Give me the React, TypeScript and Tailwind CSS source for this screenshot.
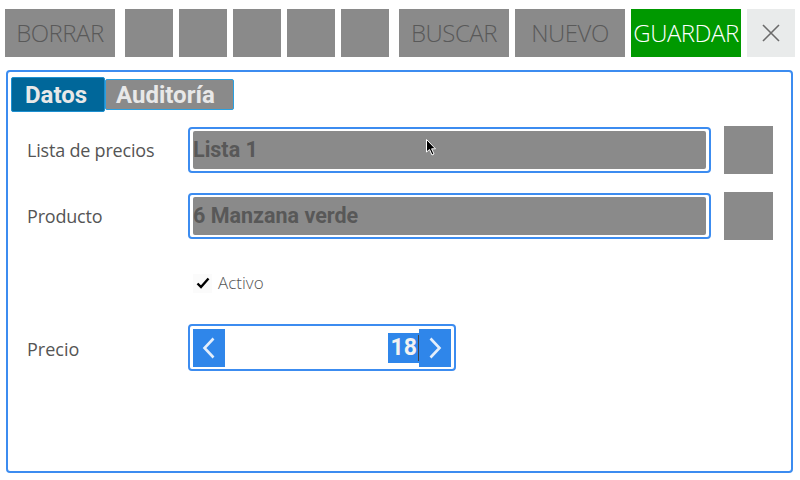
const toolFont = { fontFamily: '"Open Sans", "Liberation Sans", sans-serif' };

function ToolButton({ label, green }: { label?: string; green?: boolean }) {
  return (
    <div
      className={`h-[48px] flex items-center justify-center text-[24px] font-light tracking-[-0.5px] ${
        label ? 'w-[110px]' : 'w-[48px]'
      } ${green ? 'bg-[#009900] text-white' : 'bg-[#8a8a8a] text-[#595959]'}`}
      style={toolFont}
    >
      {label}
    </div>
  );
}

function LookupRow({ label, value }: { label: string; value: string }) {
  return (
    <div className="flex items-center h-[48px]">
      <div className="w-[161px] text-[18px] text-[#555] font-[family-name:'Open_Sans',sans-serif] tracking-[-0.2px]">{label}</div>
      <div className="w-[523px] h-[46px] border-2 border-[#3c8cf0] rounded-[4px] px-[3px] py-[2px] bg-white">
        <div className="h-full bg-[#8a8a8a] rounded-[2px] flex items-center text-[21.5px] font-bold text-[#585858] font-[family-name:Roboto,sans-serif]">
          {value}
        </div>
      </div>
      <div className="ml-[13px] w-[49px] h-[48px] bg-[#8a8a8a]" />
    </div>
  );
}

function Chevron({ dir }: { dir: 'left' | 'right' }) {
  return (
    <svg width="14" height="22" viewBox="0 0 14 22">
      <path
        d={dir === 'left' ? 'M11.5 1.5 L2.5 11 L11.5 20.5' : 'M2.5 1.5 L11.5 11 L2.5 20.5'}
        fill="none"
        stroke="#e4eefb"
        strokeWidth="2.6"
      />
    </svg>
  );
}

export default function App() {
  return (
    <div className="w-[800px] h-[480px] bg-white relative overflow-hidden">
      {/* Toolbar */}
      <div className="flex pt-[9px] pl-[5px]">
        <ToolButton label="BORRAR" />
        <div className="flex gap-[6px] ml-[10px]">
          <ToolButton />
          <ToolButton />
          <ToolButton />
          <ToolButton />
          <ToolButton />
        </div>
        <div className="flex gap-[6px] ml-[10px]">
          <ToolButton label="BUSCAR" />
          <ToolButton label="NUEVO" />
          <ToolButton label="GUARDAR" green />
          <div className="w-[48px] h-[48px] bg-[#e9ebeb] flex items-center justify-center">
            <svg width="18" height="18" viewBox="0 0 18 18">
              <path d="M1 1 L17 17 M17 1 L1 17" stroke="#6b6b6b" strokeWidth="1.6" />
            </svg>
          </div>
        </div>
      </div>

      {/* Panel */}
      <div className="ml-[6px] mt-[13px] w-[787px] h-[403px] border-2 border-[#3c8cf0] rounded-[4px]">
        {/* Tabs */}
        <div className="flex items-center pl-[3px] pt-[5px]">
          <div className="w-[94px] h-[35px] bg-[#00679a] border border-[#1d8fd0] rounded-[2px] text-[#e8e8e8] text-[24px] font-bold pl-[13px] flex items-center font-[family-name:Roboto,sans-serif]">
            Datos
          </div>
          <div className="w-[129px] h-[31px] bg-[#8a8a8a] border border-[#2aa0e0] rounded-[2px] text-[#e8e8e8] text-[24px] font-bold pl-[10px] flex items-center font-[family-name:Roboto,sans-serif]">
            Auditoría
          </div>
        </div>

        {/* Form */}
        <div className="pl-[19px] pt-[14px] flex flex-col">
          <LookupRow label="Lista de precios" value="Lista 1" />
          <div className="mt-[18px]">
            <LookupRow label="Producto" value="6 Manzana verde" />
          </div>

          <div className="mt-[31px] h-[24px] flex items-center pl-[166px]">
            <div className="w-[19px] h-[19px] bg-[#fbfbfb] flex items-center justify-center">
              <svg width="14" height="12" viewBox="0 0 14 12">
                <path d="M1.5 6.5 L5 10 L12.5 1.5" fill="none" stroke="#000" strokeWidth="2.4" />
              </svg>
            </div>
            <span className="ml-[6px] text-[17px] font-light text-[#555]" style={toolFont}>
              Activo
            </span>
          </div>

          <div className="mt-[29px] flex items-center h-[47px]">
            <div className="w-[161px] text-[18px] text-[#555] font-[family-name:'Open_Sans',sans-serif] pt-[3px]">Precio</div>
            <div className="w-[268px] h-[47px] border-2 border-[#3c8cf0] rounded-[4px] px-[3px] py-[3px] flex items-center">
              <div className="w-[32px] h-[38px] bg-[#2f86ea] flex items-center justify-center">
                <Chevron dir="left" />
              </div>
              <div className="flex-1 flex justify-end items-center">
                <span className="h-[30px] bg-[#2f86ea] text-[#f2f2f2] text-[23px] font-bold leading-[30px] pl-[3px] pr-[2px] font-[family-name:Roboto,sans-serif]">
                  18
                </span>
                <span className="w-[1px] h-[26px] bg-[#444] -ml-[1px]" />
              </div>
              <div className="w-[32px] h-[38px] bg-[#2f86ea] flex items-center justify-center">
                <Chevron dir="right" />
              </div>
            </div>
          </div>
        </div>
      </div>

      {/* Mouse pointer */}
      <svg className="absolute left-[426px] top-[139px]" width="12" height="17" viewBox="0 0 12 17">
        <path d="M0.5 0.5 L0.5 13 L3.5 10.5 L6 16 L8 15 L5.6 9.8 L9.5 9.8 Z" fill="#000" stroke="#fff" strokeWidth="1" />
      </svg>
    </div>
  );
}
